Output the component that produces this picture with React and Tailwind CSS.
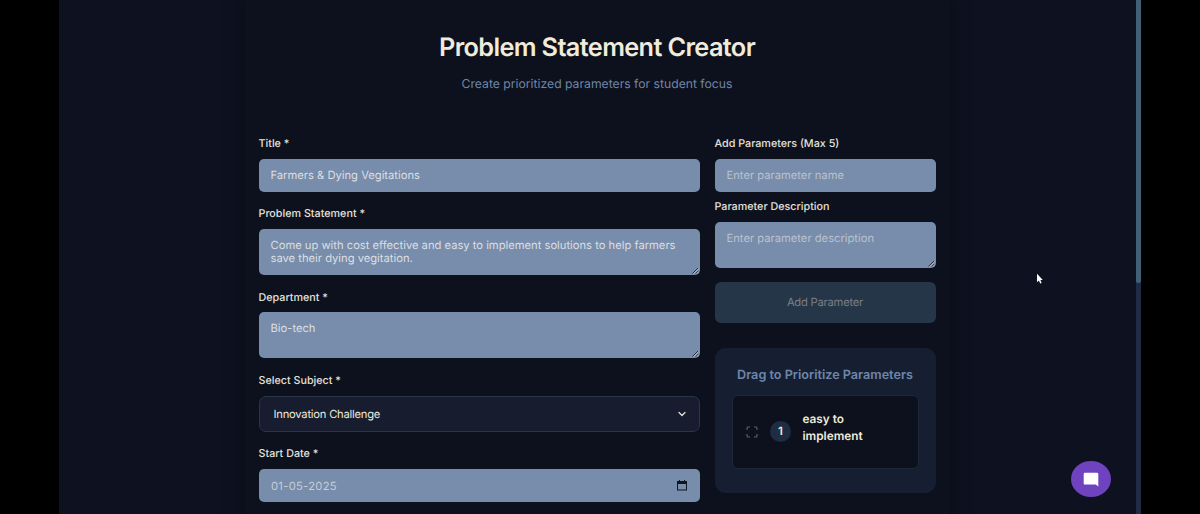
const Grip = () => (
  <svg className="absolute right-[1px] bottom-[1px] size-[7px]" viewBox="0 0 7 7" fill="none">
    <path d="M0.5 6.5 L6 1 M3.8 6.5 L6.5 3.8" stroke="#1c2230" strokeWidth="0.9" />
    <path d="M1.4 6.8 L6.6 1.8 M4.7 6.8 L6.8 4.8" stroke="#e8e8e8" strokeWidth="0.6" />
  </svg>
);

const Label = ({ children }) => (
  <div className="h-4 text-[10.75px] leading-[18px] font-medium whitespace-nowrap text-[#e4e2dc]">{children}</div>
);

const Field = ({ className, children, grip }) => (
  <div className={"relative rounded-[5px] bg-[#778dab] px-[12px] text-[11.2px] leading-[13.5px] " + className}>
    {children}
    {grip && <Grip />}
  </div>
);

export default function App() {
  return (
    <div className="relative flex h-[514px] w-[1200px] justify-center overflow-hidden bg-black pl-[59px] pr-[59px] font-['Inter',sans-serif] [text-rendering:geometricPrecision]">
      <main className="flex min-w-0 flex-1 justify-center overflow-hidden bg-[#0e1220] pr-[6px]">
        <section className="h-[560px] w-[705px] bg-[#0d111e] px-[14px] pt-[33px] shadow-[0_0_14px_2px_#090d16]">
          <h1 className="text-center text-[25.3px] leading-[30px] font-semibold tracking-[-0.025em] whitespace-nowrap text-[#f0ebdb]">Problem Statement Creator</h1>
          <p className="mt-3 text-center text-[12.2px] leading-[18px] whitespace-nowrap text-[#6f86a8]">Create prioritized parameters for student focus</p>
          <div className="mt-[42px] flex gap-[14.5px]">
            <div className="w-[441.5px]">
              <Label>Title *</Label>
              <Field className="mt-2 h-[33px] pt-[9.5px] text-[#dcdfe2]">Farmers &amp; Dying Vegitations</Field>
              <div className="h-[13px]" />
              <Label>Problem Statement *</Label>
              <Field grip className="mt-2 h-[46px] pt-[9.5px] text-[#dcdfe2]">
                Come up with cost effective and easy to implement solutions to help farmers
                <br />
                save their dying vegitation.
              </Field>
              <div className="h-[13.5px]" />
              <Label>Department *</Label>
              <Field grip className="mt-[7.9px] h-[46px] pt-[9.5px] text-[#dcdfe2]">Bio-tech</Field>
              <div className="h-[13.6px]" />
              <Label>Select Subject *</Label>
              <div className="mt-2 flex h-[36px] items-center justify-between rounded-[7px] border border-[#293648] bg-[#171d2f] pr-[12px] pl-[14px] text-[11.2px] tracking-[-0.22px] text-[#ece9dc]">
                <span>Innovation Challenge</span>
                <svg className="h-[10px] w-[10px]" viewBox="0 0 10 10" fill="none" stroke="#e8e6dc" strokeWidth="1.2" strokeLinecap="round" strokeLinejoin="round">
                  <path d="M2 3.5 L5 6.5 L8 3.5" />
                </svg>
              </div>
              <div className="h-[13px]" />
              <Label>Start Date *</Label>
              <Field className="mt-2 flex h-[33.5px] items-center justify-between pr-[13.5px] text-[#c9ced6]">
                <span className="pt-[1.5px] pl-[0.5px] tracking-[0.3px]">01-05-2025</span>
                <svg className="h-[11px] w-[10px]" viewBox="0 0 10 11">
                  <path d="M2 0 H3 V1 H7 V0 H8 V1 H10 V10.5 H0 V1 H2 Z M1 4 V9.5 H9 V4 Z" fill="#12161f" fillRule="evenodd" />
                </svg>
              </Field>
            </div>
            <div className="w-[221px]">
              <Label>Add Parameters (Max 5)</Label>
              <Field className="mt-2 h-[33px] pt-[9.5px] text-[#bac2ce]">Enter parameter name</Field>
              <div className="h-[6px]" />
              <Label>Parameter Description</Label>
              <Field grip className="mt-[7.5px] h-[46.5px] pt-[10px] text-[#bac2ce]">Enter parameter description</Field>
              <div className="mt-[14px] flex h-[41px] items-center justify-center rounded-[6px] bg-[#263649] text-[11.2px] tracking-[-0.22px] text-[#7b7e84]">Add Parameter</div>
              <div className="mt-[25px] h-[145px] rounded-[11px] bg-[#161f31] px-[17px] pt-[20px]">
                <div className="text-center text-[12.65px] leading-4 font-semibold whitespace-nowrap text-[#6f86ab]">Drag to Prioritize Parameters</div>
                <div className="mt-[11px] flex h-[73.5px] rounded-[6px] border border-[#1e2839] bg-[#0d111e] pl-[13.5px]">
                  <svg className="mt-[30px] h-[12px] w-[12px]" viewBox="0 0 12 12" fill="none" stroke="#5b6471" strokeWidth="1.1">
                    <path d="M1 4 V2 Q1 1 2 1 H4 M8 1 H10 Q11 1 11 2 V4 M11 8 V10 Q11 11 10 11 H8 M4 11 H2 Q1 11 1 10 V8" />
                  </svg>
                  <div className="mt-[25px] ml-[12px] flex size-[21px] items-center justify-center rounded-full bg-[#1e2d42] text-[11.5px] font-semibold text-[#ece9dc]">1</div>
                  <div className="mt-[15px] ml-[11.5px] text-[11.8px] leading-[17px] font-semibold text-[#f0ecdc]">
                    easy to
                    <br />
                    implement
                  </div>
                </div>
              </div>
            </div>
          </div>
        </section>
      </main>
      <div className="absolute top-0 left-[1136px] h-full w-[5px] bg-[#1f2c43]">
        <div className="h-[283px] w-full rounded-b-[2px] bg-[#435e77]" />
      </div>
      <svg className="absolute top-[273px] left-[1036px] h-[12px] w-[8px]" viewBox="0 0 8 12">
        <path d="M1 0.8 V9.2 L2.9 7.6 L4.2 10.5 L5.6 9.9 L4.4 7.1 L6.8 6.9 Z" fill="#fff" />
      </svg>
      <div className="absolute top-[461px] left-[1071px] flex h-[36px] w-[40px] items-center justify-center rounded-[50%] bg-[#6f43c0]">
        <svg className="h-[15px] w-[16px]" viewBox="0 0 16 15">
          <path d="M2 0.8 H14 Q15.3 0.8 15.3 2 V14.6 L12.8 12.6 H2 Q0.7 12.6 0.7 11.4 V2 Q0.7 0.8 2 0.8 Z" fill="#fff" />
        </svg>
      </div>
    </div>
  );
}
